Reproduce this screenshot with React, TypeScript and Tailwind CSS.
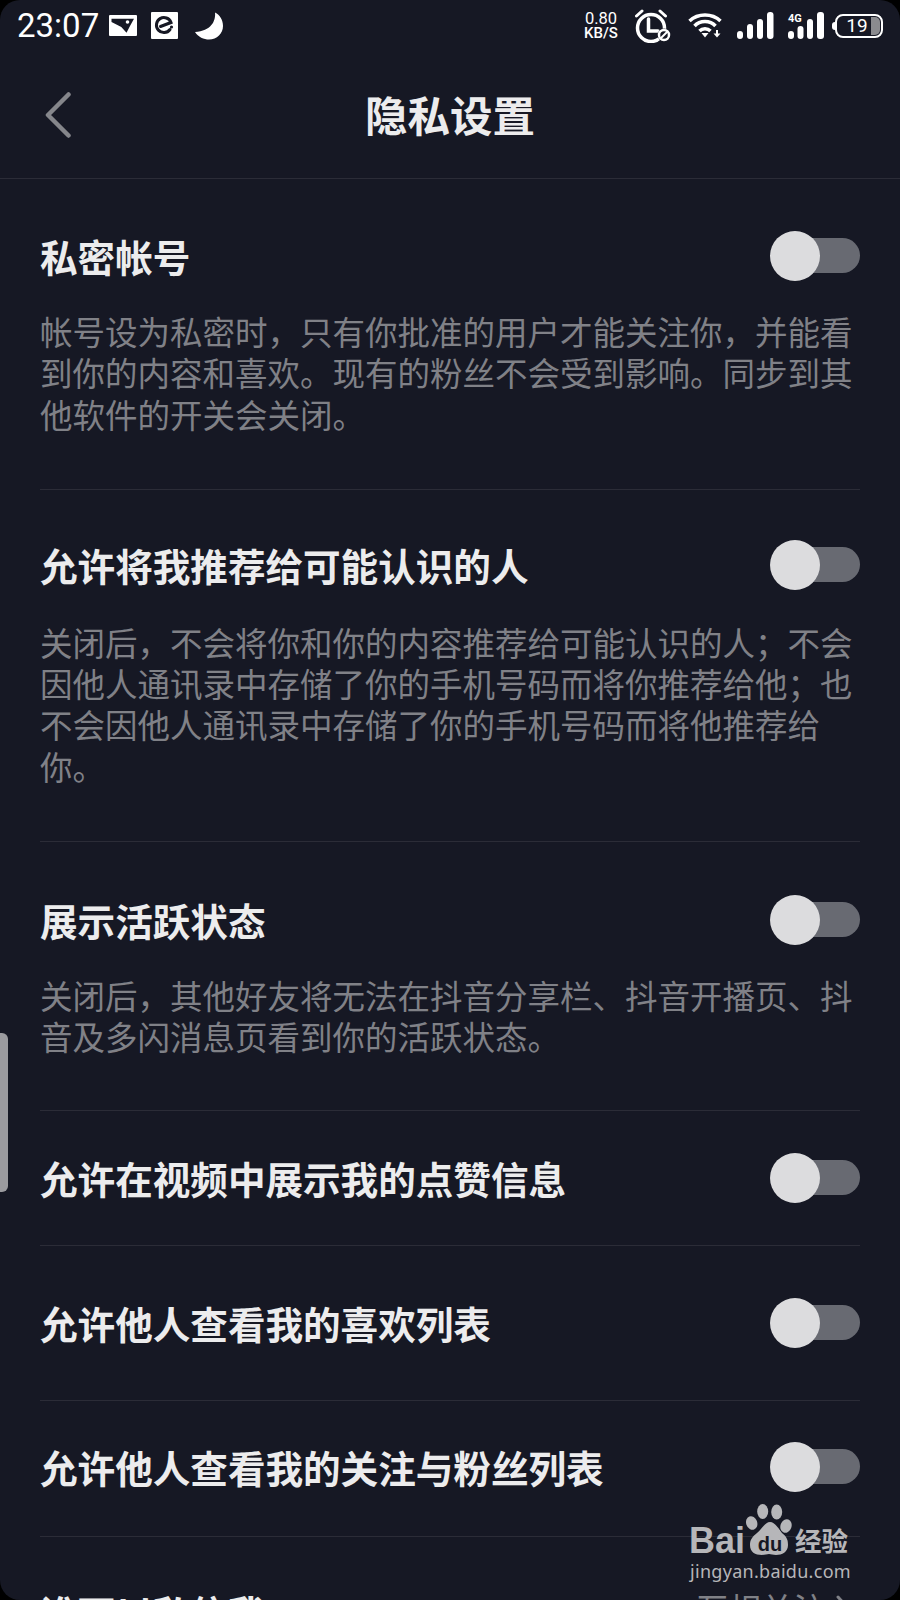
const cjk = { fontFamily: '"Noto Sans CJK SC", "Noto Sans", sans-serif' };

function Toggle() {
  return (
    <div className="relative h-[50px] w-[90px] shrink-0">
      <div className="absolute left-[20px] right-0 top-[7px] h-[35px] rounded-full bg-[#686a72]" />
      <div className="absolute left-0 top-0 h-[50px] w-[50px] rounded-full bg-[#dcdcde]" />
    </div>
  );
}

function Section({ title, desc, className, descClass }: { title: string; desc?: string; className: string; descClass?: string }) {
  return (
    <section className={`border-b border-[#2b2c37] ${className}`}>
      <div className="flex h-[50px] items-center justify-between">
        <h2 className="text-[37.6px] font-bold leading-[50px] text-[#ececed]">{title}</h2>
        <Toggle />
      </div>
      {desc && <p className={`w-[820px] text-[32.5px] leading-[41.3px] text-[#808187] ${descClass}`}>{desc}</p>}
    </section>
  );
}

function StatusBar() {
  return (
    <div className="flex h-[51px] items-center justify-between px-[17px] text-white" style={{ fontFamily: 'Roboto, sans-serif' }}>
      <div className="flex items-center">
        <span className="w-[80px] text-[33px] leading-none">23:07</span>
        <svg className="ml-[12px]" width="28" height="21" viewBox="0 0 28 21">
          <rect width="28" height="21" fill="#fff" rx="1" />
          <path d="M2.500 3.700H25L21 11 17.500 17.700 12.300 12 2.500 7Z" fill="#161824" />
          <circle cx="18.500" cy="7" r="1.800" fill="#fff" />
        </svg>
        <svg className="ml-[14px]" width="27" height="27" viewBox="0 0 27 27">
          <rect width="27" height="27" fill="#fff" rx="1" />
          <path d="M19 17.500A7.500 7.500 0 1 1 20 10.500L9.500 14.500" fill="none" stroke="#161824" strokeWidth="3" strokeLinecap="round" />
          <circle cx="20.500" cy="15" r="1.600" fill="#161824" />
        </svg>
        <svg className="ml-[17px]" width="28" height="28" viewBox="0 0 28 28">
          <path d="M20 .5C21 9 16 19 0 20 3 25 9 27.500 14 27.500 22 27.500 28 21.500 28 14 28 8 25 3 20 .5Z" fill="#fff" />
        </svg>
      </div>
      <div className="flex items-center">
        <div className="flex w-[34px] flex-col items-center leading-[15px]">
          <span className="text-[16.5px]">0.80</span>
          <span className="text-[15px] font-medium">KB/S</span>
        </div>
        <svg className="ml-[17px]" width="38" height="34" viewBox="0 0 38 34" fill="none" stroke="#fff" strokeLinecap="round">
          <circle cx="16" cy="19" r="13.500" strokeWidth="3.500" />
          <path d="M1.500 7 7 2M25 2l5.500 5" strokeWidth="3" />
          <path d="M13.500 10v12H23" strokeWidth="3.500" />
          <circle cx="29" cy="26" r="6.500" fill="#161824" stroke="none" />
          <circle cx="29" cy="26" r="5" strokeWidth="2.500" />
          <path d="M26 29l6-6" strokeWidth="2" />
        </svg>
        <svg className="ml-[15px]" width="35" height="25" viewBox="0 0 35 25" fill="none" stroke="#fff" strokeWidth="3.500">
          <path d="M1.500 8C10 0 24 0 32.500 8" />
          <path d="M6.500 13C12 7 22 7 27.500 13" />
          <path d="M11.500 18C14.500 15 19.500 15 22.500 18" />
          <path d="M13.500 20h7l-3.500 4.500z" fill="#fff" stroke="none" />
          <path d="M29 17v5" strokeWidth="2" />
          <path d="M25.500 20.500h7l-3.500 4z" fill="#fff" stroke="none" />
        </svg>
        <svg className="ml-[14px]" width="37" height="27" viewBox="0 0 37 27" fill="#fff">
          <rect x="0" y="19" width="6" height="8" rx="3" />
          <rect x="10" y="12" width="6" height="15" rx="3" />
          <rect x="20" y="7" width="6" height="20" rx="3" />
          <rect x="30" y="0" width="6.500" height="27" rx="3" />
        </svg>
        <div className="relative ml-[14px] h-[27px] w-[36px]">
          <span className="absolute left-0 top-[1px] text-[11px] font-bold leading-[11px]">4G</span>
          <svg className="absolute left-0 top-0" width="36" height="27" viewBox="0 0 36 27" fill="#fff">
            <rect x="0" y="19" width="6" height="8" rx="3" />
            <rect x="9.500" y="14" width="6" height="13" rx="3" />
            <rect x="19" y="7" width="6" height="20" rx="3" />
            <rect x="29" y="0" width="7" height="27" rx="3" />
          </svg>
        </div>
        <div className="relative ml-[11px] flex h-[24px] w-[48px] items-center justify-center rounded-[8px] border-2 border-white pr-[4px] text-[19px] leading-none">
          <span className="absolute -left-[5px] top-[6px] h-[8px] w-[3px] rounded-l-sm bg-white" />
          <span className="absolute bottom-[1px] right-[1px] top-[1px] w-[9px] rounded-r-[5px] bg-[#8b8b8f]" />
          <span>19</span>
        </div>
      </div>
    </div>
  );
}

function BaiduLogo() {
  return (
    <div className="absolute left-[689px] top-[1503px] text-[#b6b6b9]">
      <div className="flex h-[54px] items-end">
        <span className="mb-[1px] text-[36px] font-bold leading-[30px]" style={{ fontFamily: '"Liberation Sans", sans-serif' }}>Bai</span>
        <div className="relative h-[54px] w-[50px] shrink-0">
          <svg className="absolute inset-0" width="50" height="54" viewBox="0 0 50 54" fill="currentColor">
            <ellipse cx="17.700" cy="8.500" rx="5.500" ry="7.500" />
            <ellipse cx="31.700" cy="9" rx="5.500" ry="7.500" />
            <ellipse cx="6.700" cy="20" rx="5.500" ry="7" transform="rotate(-20 6.700 20)" />
            <ellipse cx="41" cy="23" rx="5.500" ry="7" transform="rotate(20 41 23)" />
            <path d="M25 19C30 19 33 25 37 30 42 34 43 37 43 42 43 49 37 52 31 52 28 52 26 51 24 51 22 51 20 52 17 52 10 52 5 49 5 42 5 37 7 34 12 30 17 26 20 19 25 19Z" />
          </svg>
          <span className="absolute left-0 right-0 top-[31px] text-center text-[20px] font-bold leading-[20px] text-[#161824]" style={{ fontFamily: '"Liberation Sans", sans-serif' }}>du</span>
        </div>
        <span className="mb-[2px] text-[26.5px] font-bold leading-[30px]" style={cjk}>经验</span>
      </div>
      <div className="ml-[1px] mt-[1px] whitespace-nowrap text-[18px] leading-[26px] tracking-[0.3px]" style={{ fontFamily: '"Noto Sans", sans-serif' }}>jingyan.baidu.com</div>
    </div>
  );
}

export default function App() {
  return (
    <div className="h-[1600px] w-[900px] overflow-hidden bg-black" style={cjk}>
      <div className="relative h-full overflow-hidden rounded-[20px] bg-[#161824]">
        <StatusBar />
        <header className="grid h-[128px] grid-cols-[1fr_auto_1fr] items-center border-b border-[#2b2c37] pl-[45px]">
          <svg width="26" height="46" viewBox="0 0 26 46" fill="none" stroke="#85868b" strokeWidth="4.500" strokeLinecap="round" strokeLinejoin="round">
            <path d="M23.500 2.500 3 23l20.500 20.500" />
          </svg>
          <h1 className="-ml-[45px] text-[42.5px] font-bold leading-none text-[#ececed]">隐私设置</h1>
          <span />
        </header>
        <main className="pl-[40px] pr-[40px]">
          <Section className="pb-[55px] pt-[52px]" descClass="mt-[29px]" title="私密帐号" desc="帐号设为私密时，只有你批准的用户才能关注你，并能看到你的内容和喜欢。现有的粉丝不会受到影响。同步到其他软件的开关会关闭。" />
          <Section className="pb-[55px] pt-[50px]" descClass="mt-[31px]" title="允许将我推荐给可能认识的人" desc="关闭后，不会将你和你的内容推荐给可能认识的人；不会因他人通讯录中存储了你的手机号码而将你推荐给他；也不会因他人通讯录中存储了你的手机号码而将他推荐给你。" />
          <Section className="pb-[53px] pt-[53px]" descClass="mt-[29px]" title="展示活跃状态" desc="关闭后，其他好友将无法在抖音分享栏、抖音开播页、抖音及多闪消息页看到你的活跃状态。" />
          <Section className="h-[135px] pt-[42px]" title="允许在视频中展示我的点赞信息" />
          <Section className="h-[155px] pt-[52px]" title="允许他人查看我的喜欢列表" />
          <Section className="h-[136px] pt-[41px]" title="允许他人查看我的关注与粉丝列表" />
          <div className="mt-[50px] flex h-[50px] items-center justify-between">
            <span className="text-[37.6px] font-bold leading-[50px] text-[#ececed]">谁可以私信我</span>
            <span className="flex -translate-y-[4px] items-center text-[32.5px] leading-[50px] text-[#808187]">
              互相关注
              <svg className="ml-[10px] mr-[2px]" width="22" height="26" viewBox="0 0 22 26" fill="none" stroke="#808187" strokeWidth="3" strokeLinecap="round">
                <path d="M2 2l10 11-10 11" />
              </svg>
            </span>
          </div>
        </main>
        <div className="absolute left-0 top-[1033px] h-[159px] w-[8px] rounded-r-[6px] bg-[#9b9b9f]" />
        <BaiduLogo />
      </div>
    </div>
  );
}
